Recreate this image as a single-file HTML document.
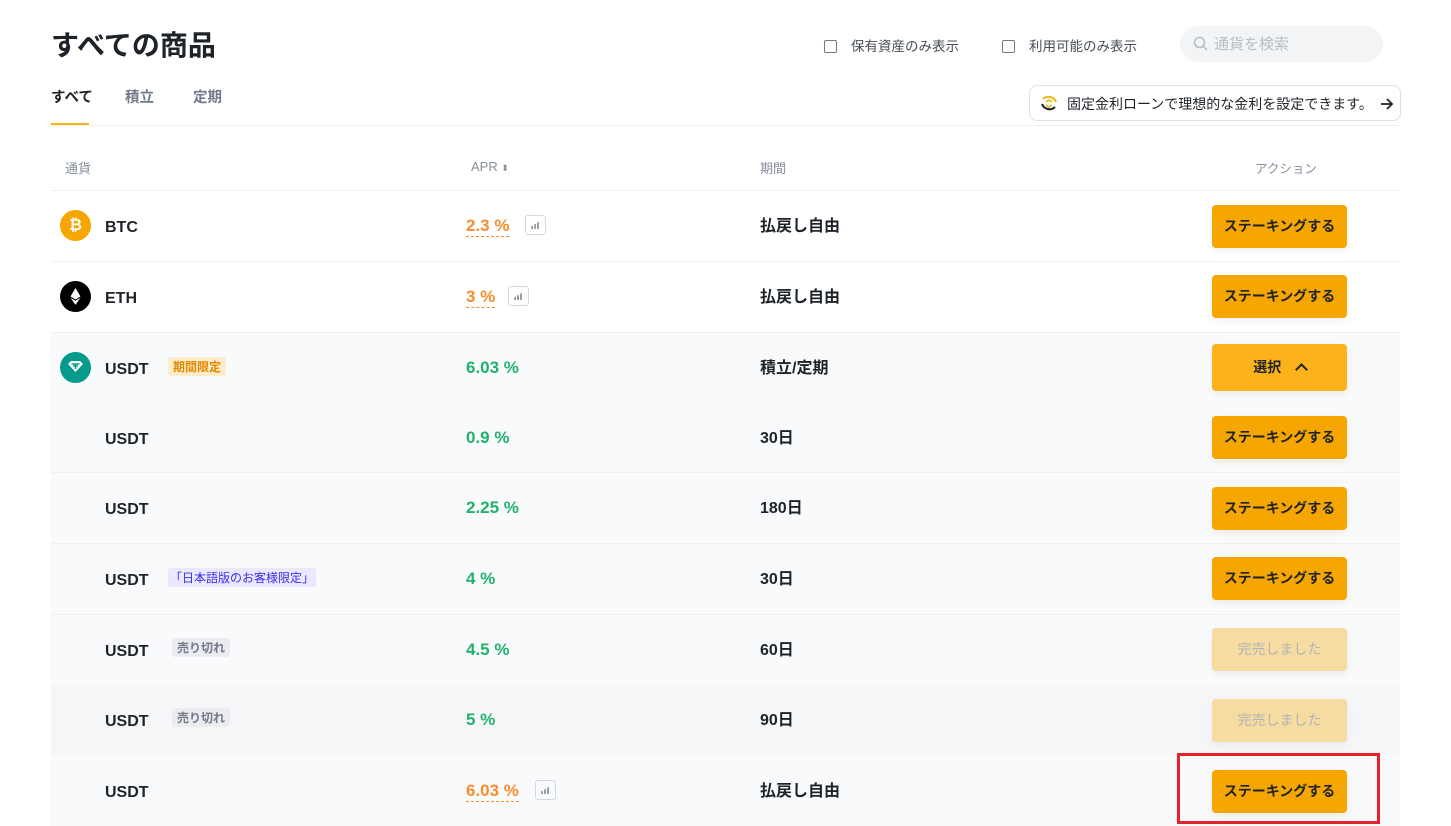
<!DOCTYPE html>
<html><head><meta charset="utf-8">
<style>
*{margin:0;padding:0;box-sizing:border-box}
body{width:1451px;height:826px;overflow:hidden;background:#fff;font-family:"Liberation Sans","Noto Sans CJK JP",sans-serif;color:#1e2329;position:relative}
.abs{position:absolute}
h1{position:absolute;left:51px;top:24px;font-size:28px;font-weight:700;color:#1e2329}
.tab{position:absolute;top:86px;font-size:14.5px;font-weight:700;color:#707a8a}
.cb{position:absolute;top:40px;width:13px;height:13px;border:1px solid #707a8a;border-radius:2px}
.cbl{position:absolute;top:35px;font-size:13.5px;color:#474d57}
.search{position:absolute;left:1180px;top:26px;width:203px;height:36px;border-radius:18px;background:#f3f4f6;color:#b7bdc6;font-size:15px;padding:7px 0 0 34px}
.banner{position:absolute;left:1029px;top:85px;width:372px;height:36px;border:1px solid #dde0e5;border-radius:8px;font-size:14px;color:#1e2329;padding:8px 0 0 37px;white-space:nowrap}
.row{position:absolute;left:51px;width:1349px}
.name{position:absolute;left:54px;font-size:16px;font-weight:700}
.apr{position:absolute;left:415px;font-size:17px;font-weight:700}
.green{color:#20b26c}
.orange{color:#f98c2c;border-bottom:1px dashed #f98c2c}
.per{position:absolute;left:709px;font-size:16px;font-weight:700}
.btn{position:absolute;left:1161px;width:135px;height:43px;border-radius:4px;background:#f6a600;font-size:14px;font-weight:700;text-align:center;line-height:43px;color:#1e2329;box-shadow:0 3px 8px rgba(0,0,0,0.06)}
.dis{background:#f7dca2;color:#b0b3b8;font-weight:400}
.tag{position:absolute;left:117px;font-size:12px;padding:1px 5px;border-radius:3px}
.chart{position:absolute;width:21px;height:20px;border:1px solid #d5d8dd;border-radius:3px}
.chart::after{content:"";position:absolute;left:5px;top:5px;width:9px;height:8px;background:linear-gradient(90deg,#9aa0a8 0 2px,transparent 2px 3px,#9aa0a8 3px 5px,transparent 5px 6px,#9aa0a8 6px 8px,transparent 8px);clip-path:polygon(0 70%,100% 0,100% 100%,0 100%)}
.line{position:absolute;left:51px;width:1349px;height:1px;background:#eef0f2}
.ic{position:absolute;left:9px;width:31px;height:31px;border-radius:50%}
.row .name{top:28px}
.row .per{top:21px}
</style></head><body>
<h1>すべての商品</h1>
<div class="tab" style="left:51px;color:#1e2329">すべて</div>
<div class="tab" style="left:125px">積立</div>
<div class="tab" style="left:193px">定期</div>
<div class="abs" style="left:51px;top:123px;width:38px;height:3px;background:#f0b90b"></div>
<div class="line" style="top:125px"></div>

<div class="cb" style="left:824px"></div><div class="cbl" style="left:851px">保有資産のみ表示</div>
<div class="cb" style="left:1002px"></div><div class="cbl" style="left:1029px">利用可能のみ表示</div>
<div class="search">通貨を検索
<svg class="abs" style="left:13px;top:10px" width="16" height="16" viewBox="0 0 16 16"><circle cx="6.5" cy="6.5" r="5" fill="none" stroke="#b7bdc6" stroke-width="1.6"/><path d="M10.5 10.5L14 14" stroke="#b7bdc6" stroke-width="1.6"/></svg></div>
<div class="banner">固定金利ローンで理想的な金利を設定できます。
<svg class="abs" style="left:9px;top:7px" width="20" height="20" viewBox="0 0 20 20"><path d="M4 6A8 8 0 0 1 17 9" fill="none" stroke="#f0b90b" stroke-width="2"/><path d="M16 14A8 8 0 0 1 3 11" fill="none" stroke="#1e2329" stroke-width="2"/><path d="M7 9l3-2 3 2M7 12l3 2 3-2" fill="none" stroke="#f0b90b" stroke-width="1.6"/></svg>
<svg class="abs" style="left:350px;top:11px" width="14" height="14" viewBox="0 0 14 14"><path d="M1 7h11M7 2l5 5-5 5" fill="none" stroke="#1e2329" stroke-width="1.8"/></svg></div>

<div class="abs" style="left:65px;top:158px;font-size:13px;color:#848e9c">通貨</div>
<div class="abs" style="left:471px;top:159px;font-size:13px;color:#848e9c">APR <span style="font-size:9px">⬍</span></div>
<div class="abs" style="left:760px;top:158px;font-size:13px;color:#848e9c">期間</div>
<div class="abs" style="left:1255px;top:158px;font-size:12.5px;color:#848e9c">アクション</div>
<div class="line" style="top:190px"></div>

<div class="row" style="top:191px;height:70px">
<div class="ic" style="top:19px;background:#f7a600;color:#fff;font-weight:700;font-size:16px;text-align:center;line-height:31px">₿</div>
<div class="name">BTC</div>
<div class="apr orange" style="top:25px">2.3 %</div>
<div class="chart" style="left:474px;top:24px"></div>
<div class="per">払戻し自由</div>
<div class="btn" style="top:14px">ステーキングする</div>
</div>
<div class="line" style="top:261px"></div>
<div class="row" style="top:262px;height:70px">
<div class="ic" style="top:19px;background:#000"><svg width="31" height="31" viewBox="0 0 31 31"><path d="M15.5 7l-5 8.5 5 3 5-3zM10.5 16.8l5 7 5-7-5 3z" fill="#fff"/></svg></div>
<div class="name">ETH</div>
<div class="apr orange" style="top:25px">3 %</div>
<div class="chart" style="left:457px;top:24px"></div>
<div class="per">払戻し自由</div>
<div class="btn" style="top:13px">ステーキングする</div>
</div>
<div class="line" style="top:332px"></div>

<div class="abs" style="left:51px;top:333px;width:1349px;height:352px;background:#f9fafb"></div>
<div class="abs" style="left:51px;top:685px;width:1349px;height:70px;background:#f5f6f8"></div>
<div class="abs" style="left:51px;top:755px;width:1349px;height:71px;background:#f9fafb"></div>

<div class="row" style="top:333px;height:70px">
<div class="ic" style="top:19px;background:#059a8c"><svg width="31" height="31" viewBox="0 0 31 31"><path d="M8 12l3-3h9l3 3-7.5 8z" fill="#fff"/><path d="M11.5 12h8M15.5 12v5M13 14h5" stroke="#059a8c" stroke-width="1.5"/></svg></div>
<div class="name">USDT</div>
<div class="tag" style="top:24px;background:#fdeccb;color:#e08a00;font-weight:700">期間限定</div>
<div class="apr green" style="top:25px">6.03 %</div>
<div class="per">積立/定期</div>
<div class="btn" style="top:11px;height:47px;line-height:47px;background:#fcb21a">選択 &nbsp;&nbsp;&nbsp;<span style="display:inline-block;width:9px;height:9px;border-left:2px solid #1e2329;border-top:2px solid #1e2329;transform:rotate(45deg);position:relative;top:2px"></span></div>
</div>
<div class="row" style="top:403px;height:70px">
<div class="name">USDT</div>
<div class="apr green" style="top:25px">0.9 %</div>
<div class="per">30日</div>
<div class="btn" style="top:13px">ステーキングする</div>
</div>
<div class="line" style="top:472px"></div>
<div class="row" style="top:473px;height:70px">
<div class="name">USDT</div>
<div class="apr green" style="top:25px">2.25 %</div>
<div class="per">180日</div>
<div class="btn" style="top:14px">ステーキングする</div>
</div>
<div class="line" style="top:543px"></div>
<div class="row" style="top:544px;height:70px">
<div class="name">USDT</div>
<div class="tag" style="top:24px;background:#ebe8fd;color:#3a2ee6;padding:1px 2px">「日本語版のお客様限定」</div>
<div class="apr green" style="top:25px">4 %</div>
<div class="per">30日</div>
<div class="btn" style="top:13px">ステーキングする</div>
</div>
<div class="line" style="top:614px"></div>
<div class="row" style="top:615px;height:70px">
<div class="name">USDT</div>
<div class="tag" style="left:121px;top:23px;background:#eaecef;color:#707a8a;font-weight:700">売り切れ</div>
<div class="apr green" style="top:25px">4.5 %</div>
<div class="per">60日</div>
<div class="btn dis" style="top:13px">完売しました</div>
</div>
<div class="row" style="top:685px;height:70px">
<div class="name">USDT</div>
<div class="tag" style="left:121px;top:23px;background:#eaecef;color:#707a8a;font-weight:700">売り切れ</div>
<div class="apr green" style="top:25px">5 %</div>
<div class="per">90日</div>
<div class="btn dis" style="top:14px">完売しました</div>
</div>
<div class="row" style="top:755px;height:71px">
<div class="name" style="top:29px">USDT</div>
<div class="apr orange" style="top:26px">6.03 %</div>
<div class="chart" style="left:484px;top:25px"></div>
<div class="per" style="top:22px">払戻し自由</div>
<div class="btn" style="top:15px">ステーキングする</div>
</div>
<div class="abs" style="left:1177px;top:753px;width:203px;height:71px;border:3px solid #e8202a"></div>
</body></html>
